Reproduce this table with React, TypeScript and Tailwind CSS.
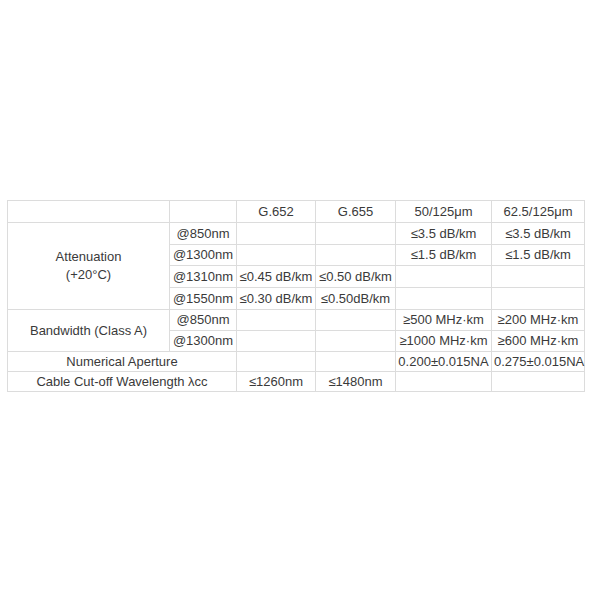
const cell = "border border-[#dcdcdc] px-[2px] text-center align-middle whitespace-nowrap overflow-visible";

export default function App() {
  return (
    <div className="h-[600px] w-[600px] bg-white pt-[200px] pl-[7px] font-['Liberation_Sans',Arial,sans-serif] text-[13px] leading-[18px] text-[#3a3a3a]">
      <table className="table-fixed border-collapse w-[577px]">
        <colgroup>
          <col className="w-[162px]" />
          <col className="w-[67px]" />
          <col className="w-[79px]" />
          <col className="w-[80px]" />
          <col className="w-[96px]" />
          <col className="w-[93px]" />
        </colgroup>
        <tbody>
          <tr className="h-[22px]">
            <td className={cell}></td>
            <td className={cell}></td>
            <td className={cell}>G.652</td>
            <td className={cell}>G.655</td>
            <td className={cell}>50/125μm</td>
            <td className={cell}>62.5/125μm</td>
          </tr>
          <tr className="h-[22px]">
            <td className={cell} rowSpan={4}>
              Attenuation
              <br />
              (+20°C)
            </td>
            <td className={cell}>@850nm</td>
            <td className={cell}></td>
            <td className={cell}></td>
            <td className={cell}>≤3.5 dB/km</td>
            <td className={cell}>≤3.5 dB/km</td>
          </tr>
          <tr className="h-[21px]">
            <td className={cell}>@1300nm</td>
            <td className={cell}></td>
            <td className={cell}></td>
            <td className={cell}>≤1.5 dB/km</td>
            <td className={cell}>≤1.5 dB/km</td>
          </tr>
          <tr className="h-[22px]">
            <td className={cell}>@1310nm</td>
            <td className={cell}>≤0.45 dB/km</td>
            <td className={cell}>≤0.50 dB/km</td>
            <td className={cell}></td>
            <td className={cell}></td>
          </tr>
          <tr className="h-[22px]">
            <td className={cell}>@1550nm</td>
            <td className={cell}>≤0.30 dB/km</td>
            <td className={cell}>≤0.50dB/km</td>
            <td className={cell}></td>
            <td className={cell}></td>
          </tr>
          <tr className="h-[21px]">
            <td className={cell} rowSpan={2}>Bandwidth (Class A)</td>
            <td className={cell}>@850nm</td>
            <td className={cell}></td>
            <td className={cell}></td>
            <td className={cell}>≥500 MHz·km</td>
            <td className={cell}>≥200 MHz·km</td>
          </tr>
          <tr className="h-[21px]">
            <td className={cell}>@1300nm</td>
            <td className={cell}></td>
            <td className={cell}></td>
            <td className={cell}>≥1000 MHz·km</td>
            <td className={cell}>≥600 MHz·km</td>
          </tr>
          <tr className="h-[20px]">
            <td className={cell} colSpan={2}>Numerical Aperture</td>
            <td className={cell}></td>
            <td className={cell}></td>
            <td className={cell}>0.200±0.015NA</td>
            <td className={cell}>0.275±0.015NA</td>
          </tr>
          <tr className="h-[20px]">
            <td className={cell} colSpan={2}>Cable Cut-off Wavelength λcc</td>
            <td className={cell}>≤1260nm</td>
            <td className={cell}>≤1480nm</td>
            <td className={cell}></td>
            <td className={cell}></td>
          </tr>
        </tbody>
      </table>
    </div>
  );
}
